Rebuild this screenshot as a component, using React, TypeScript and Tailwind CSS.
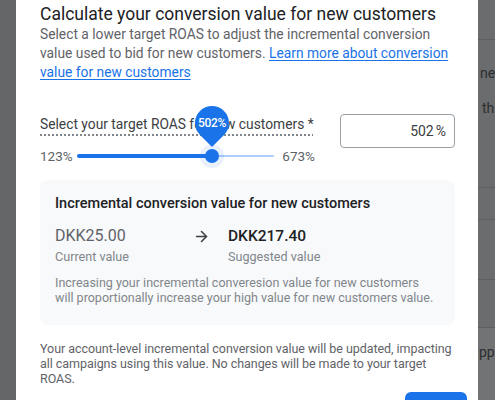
import { ArrowRight } from "lucide-react";

const font = { fontFamily: "Roboto, 'Noto Sans', Arial, sans-serif" };

function Backdrop() {
  // the dimmed page that peeks out on the right of the dialog
  return (
    <div className="flex w-[17px] shrink-0 flex-col overflow-hidden bg-[#6b6c6d] text-[14px] leading-none text-[#2d2e30]">
      <div className="h-[40px] border-b border-[#5d5e5f]" />
      <div className="h-[26px]" />
      <div className="pl-[2px]">ne</div>
      <div className="h-[21px]" />
      <div className="pl-[4px]">th</div>
      <div className="h-[73px] border-b border-[#5d5e5f]" />
      <div className="h-[32px] border-b border-[#5d5e5f]" />
      <div className="h-[60px] border-b border-[#5d5e5f]" />
      <div className="h-[48px] border-b border-[#5d5e5f]" />
      <div className="flex-1 bg-[#727374] pl-[1px] pt-[17px]">ppo</div>
    </div>
  );
}

function Slider() {
  const pct = (214 - 77) / 200;
  return (
    <div className="mt-[10px] flex h-6 items-center text-[13.5px] text-[#5f6368]">
      <span className="w-[37px]">123%</span>
      <div className="relative h-6 w-[200px]">
        <div className="absolute left-0 right-0 top-[11px] h-[2px] rounded bg-[#aecbfa]" />
        <div
          className="absolute left-0 top-[10px] h-1 rounded bg-[#1a73e8]"
          style={{ width: `${pct * 100}%` }}
        />
        <div
          className="absolute top-0 -ml-3 h-6 w-6 rounded-full bg-[#1a73e8]/10"
          style={{ left: `${pct * 100}%` }}
        />
        <div
          className="absolute top-[5px] -ml-[7px] h-[14px] w-[14px] rounded-full bg-[#1a73e8]"
          style={{ left: `${pct * 100}%` }}
        />
        <div
          className="absolute -top-[38px] -ml-[17px] h-[34px] w-[34px]"
          style={{ left: `${pct * 100}%` }}
        >
          <div className="absolute inset-0 rotate-45 rounded-full rounded-br-none bg-[#1a73e8]" />
          <span className="absolute inset-0 flex items-center justify-center text-[12px] font-medium tracking-[-0.3px] text-white">
            502%
          </span>
        </div>
      </div>
      <span className="ml-[8px]">673%</span>
    </div>
  );
}

export default function App() {
  return (
    <div className="flex h-[400px] w-[495px] overflow-hidden bg-[#656667]" style={font}>
      <div className="w-4 shrink-0 bg-[#656667]" />
      <div className="w-[462px] shrink-0 bg-white pl-6 pr-[23px] pt-[2px]">
        <h1 className="whitespace-nowrap text-[17.5px] leading-6 text-[#202124]">
          Calculate your conversion value for new customers
        </h1>
        <p className="mt-[-1px] text-[13.8px] leading-[19px] text-[#5f6368]">
          Select a lower target ROAS to adjust the incremental conversion value
          used to bid for new customers.{" "}
          <a href="#" className="text-[#1a73e8] underline underline-offset-2">
            Learn more about conversion value for new customers
          </a>
        </p>

        <div className="mt-[32px] flex gap-[25px]">
          <div className="w-[275px]">
            <div className="whitespace-nowrap text-[13.8px] leading-5 text-[#3c4043]">
              <span className="underline decoration-[#80868b] decoration-dotted decoration-[1.5px] underline-offset-[5px]">
                Select your target ROAS for new customers *
              </span>
            </div>
            <Slider />
          </div>
          <div className="flex h-[34px] w-[115px] items-center justify-end rounded border border-[#9aa0a6] pr-[8px] text-[14px] text-[#3c4043]">
            502<span className="ml-[2px]">%</span>
          </div>
        </div>

        <div className="mt-[12px] rounded-lg bg-[#f8f9fa] px-[15px] pb-[20px] pt-[14px]">
          <div className="whitespace-nowrap text-[14.5px] font-medium leading-5 text-[#202124]">
            Incremental conversion value for new customers
          </div>
          <div className="mt-[10px] flex">
            <div className="w-[138px]">
              <div className="text-[16px] leading-6 text-[#5f6368]">DKK25.00</div>
              <div className="text-[12.6px] leading-[18px] text-[#80868b]">Current value</div>
            </div>
            <ArrowRight className="mt-[4px] h-[17px] w-[17px] text-[#3c4043]" strokeWidth={2.2} />
            <div className="ml-[18px]">
              <div className="text-[15.5px] font-medium leading-6 text-[#202124]">DKK217.40</div>
              <div className="text-[12.6px] leading-[18px] text-[#80868b]">Suggested value</div>
            </div>
          </div>
          <p className="mt-[9px] whitespace-nowrap text-[12.5px] leading-[15px] text-[#80868b]">
            Increasing your incremental converesion value for new customers
            <br />
            will proportionally increase your high value for new customers value.
          </p>
        </div>

        <p className="mt-[16px] whitespace-nowrap text-[12.5px] leading-[15px] tracking-[-0.05px] text-[#5f6368]">
          Your account-level incremental conversion value will be updated, impacting
          <br />
          all campaigns using this value. No changes will be made to your target
          <br />
          ROAS.
        </p>

        <div className="mt-[6px] flex justify-end gap-[12px]">
          <button className="h-9 rounded px-2 text-[14px] font-medium text-[#1a73e8]">Cancel</button>
          <button className="-mr-[12px] h-9 w-[62px] rounded-md bg-[#1a73e8] text-[14px] font-medium text-white">
            Apply
          </button>
        </div>
      </div>
      <Backdrop />
    </div>
  );
}
